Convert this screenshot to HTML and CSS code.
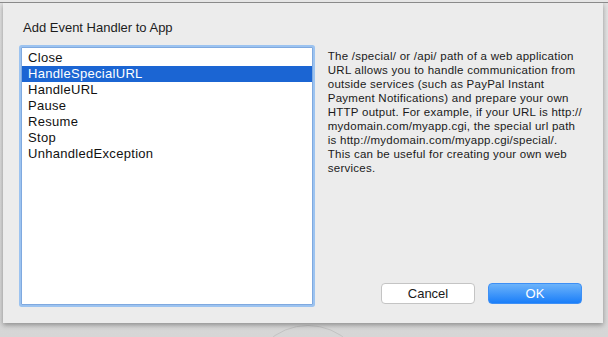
FILE: index.html
```html
<!DOCTYPE html>
<html lang="en">
<head>
    <meta charset="UTF-8">
    <title>Add Event Handler to App</title>
    <link rel="stylesheet" href="styles.css">
</head>
<body>
    <div class="window-edge"></div>
    <div class="desk">
        <div class="ring"></div>
        <div class="sheet">
            <div class="sheet-title">Add Event Handler to App</div>
            <div class="sheet-body">
                <ul class="events">
                    <li>Close</li>
                    <li class="selected">HandleSpecialURL</li>
                    <li>HandleURL</li>
                    <li>Pause</li>
                    <li>Resume</li>
                    <li>Stop</li>
                    <li>UnhandledException</li>
                </ul>
                <div class="side">
                    <p class="help">The /special/ or /api/ path of a web application<br>URL allows you to handle communication from<br>outside services (such as PayPal Instant<br>Payment Notifications) and prepare your own<br>HTTP output. For example, if your URL is http://<br>mydomain.com/myapp.cgi, the special url path<br>is http://mydomain.com/myapp.cgi/special/.<br>This can be useful for creating your own web<br>services.</p>
                    <div class="buttons">
                        <button type="button" class="btn">Cancel</button>
                        <button type="button" class="btn primary">OK</button>
                    </div>
                </div>
            </div>
        </div>
    </div>
</body>
</html>
```

FILE: styles.css
```css
body {
    margin: 0;
    padding: 0;
    width: 608px;
    height: 337px;
    overflow: hidden;
    font-family: "Liberation Sans", Arial, sans-serif;
    background: linear-gradient(#e2e2e2, #d6d6d6);
    color: #1a1a1a;
}

.window-edge {
    height: 2px;
    background-color: #e6e6e6;
    border-bottom: 1px solid #8a8a8a;
}

.desk {
    position: relative;
    height: 334px;
    overflow: hidden;
}

/* partly hidden circle under the sheet */
.ring {
    position: absolute;
    left: 248px;
    top: 322px;
    width: 118px;
    height: 118px;
    border: 1px solid #c3c3c3;
    border-radius: 50%;
}

.sheet {
    position: relative;
    margin-left: 3px;
    width: 600px;
    height: 320px;
    box-sizing: border-box;
    padding: 17px 21px 0 18px;
    background-color: #ececec;
    box-shadow: 0 2px 5px rgba(0, 0, 0, 0.35);
}

.sheet-title {
    padding-left: 2px;
    margin-bottom: 11px;
    font-size: 13px;
    line-height: 16px;
    color: #1c1c1c;
}

.sheet-body {
    display: flex;
    gap: 11px;
}

.events {
    list-style: none;
    margin: 0;
    padding: 2px 0 0 0;
    width: 294px;
    height: 258px;
    box-sizing: border-box;
    background-color: #ffffff;
    border: 1px solid #7fa9df;
    box-shadow: 0 0 0 2px #9cc3f0;
    border-radius: 1px;
}

.events li {
    height: 16px;
    line-height: 16px;
    padding-left: 6px;
    font-size: 13px;
    letter-spacing: 0.3px;
    color: #111111;
}

.events li.selected {
    background-color: #1b65d3;
    color: #ffffff;
}

.side {
    flex: 1;
    display: flex;
    flex-direction: column;
    justify-content: space-between;
    height: 258px;
}

.help {
    margin: 2px 0 0 0;
    padding-left: 4px;
    white-space: nowrap;
    font-size: 11.5px;
    letter-spacing: 0.25px;
    line-height: 14px;
    color: #1a1a1a;
}

.buttons {
    display: flex;
    justify-content: flex-end;
    gap: 13px;
    margin-bottom: 1px;
}

.btn {
    width: 94px;
    height: 21px;
    padding: 0;
    border: 1px solid #c4c4c4;
    border-radius: 4px;
    background-color: #ffffff;
    font-family: "Liberation Sans", Arial, sans-serif;
    font-size: 13px;
    color: #1a1a1a;
}

.btn.primary {
    border-color: #3d8ff5;
    background: linear-gradient(#6cb3fa, #1a7ef9);
    color: #ffffff;
}
```
